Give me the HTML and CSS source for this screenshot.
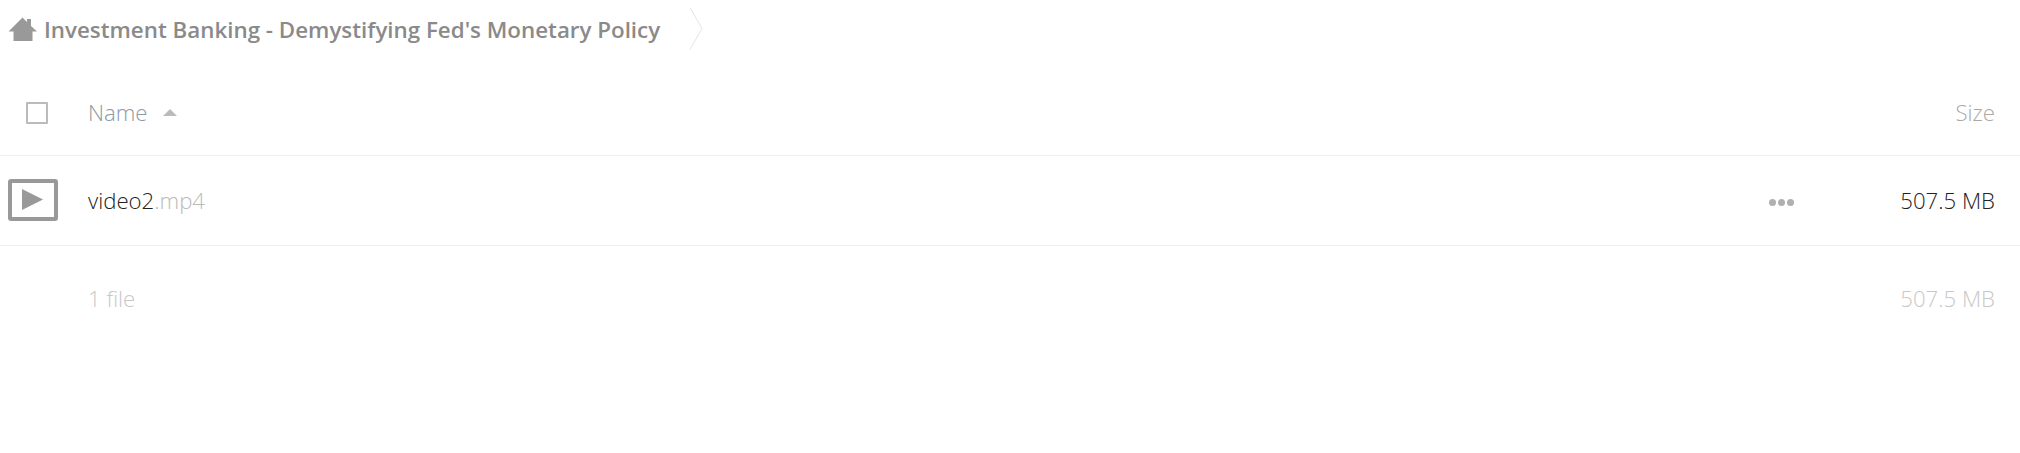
FILE: index.html
```html
<!DOCTYPE html>
<html lang="en">
<head>
<meta charset="utf-8">
<title>Files</title>
<link rel="stylesheet" href="styles.css">
</head>
<body>
<nav class="crumbs">
  <svg class="home" width="30" height="26" viewBox="0 0 30 26"><path d="M14.500 0.500 L19 5 V2 H23 V9 L29 14.500 H24.500 V24 H5.500 V14.500 H0.500 Z" fill="#999"/></svg>
  <span class="crumb">Investment Banking - Demystifying Fed's Monetary Policy</span>
  <svg class="chev" width="14" height="44" viewBox="0 0 14 44"><path d="M1 0.500 L13 21.500 L1 42.500" fill="none" stroke="#e4e4e4" stroke-width="1"/></svg>
</nav>
<div class="row head">
  <div class="c-icon"><span class="check"></span></div>
  <div class="c-name name-h">Name <span class="sort"></span></div>
  <div class="c-size size-h">Size</div>
</div>
<div class="row file">
  <div class="c-icon">
    <svg class="thumb" width="50" height="42" viewBox="0 0 50 42"><rect x="2" y="2" width="46" height="38" rx="1" fill="#fff" stroke="#999" stroke-width="4"/><path d="M14 10 V31 L35 20.500 Z" fill="#999"/></svg>
  </div>
  <div class="c-name"><span class="base">video2</span><span class="ext">.mp4</span></div>
  <div class="more"><i></i><i></i><i></i></div>
  <div class="c-size size-v">507.5 MB</div>
</div>
<div class="row sum">
  <div class="c-icon"></div>
  <div class="c-name">1 file</div>
  <div class="c-size">507.5 MB</div>
</div>
</body>
</html>
```
FILE: styles.css
```css
* { box-sizing: border-box; }
html, body { margin: 0; padding: 0; background: #fff; }
body { font-family: "Open Sans", "Liberation Sans", sans-serif; font-size: 22.2px; font-weight: 300; height: 453px; overflow: hidden; }
.crumbs { display: flex; align-items: center; height: 60px; }
.home { margin-left: 8px; flex: none; }
.crumb { margin-left: 6px; margin-top: -1px; font-size: 22.35px; font-weight: 600; color: #8a8a8a; white-space: nowrap; }
.chev { margin-left: 29px; margin-top: -2px; flex: none; }
.row { display: flex; align-items: center; padding-right: 25px; }
.head { height: 96px; padding-top: 10px; border-bottom: 1px solid #eee; }
.file { height: 90px; padding-bottom: 1px; border-bottom: 1px solid #eee; }
.sum { height: 104px; color: #c8c8c8; }
.c-icon { width: 88px; flex: none; display: flex; }
.c-name { flex: 1; white-space: nowrap; }
.c-size { flex: none; text-align: right; white-space: nowrap; }
.check { width: 22px; height: 22px; margin-left: 26px; border: 2px solid #bbb; border-radius: 1px; }
.thumb { margin-left: 8px; }
.name-h { color: #8c9aa6; display: flex; align-items: center; gap: 15px; }
.sort { width: 0; height: 0; border: 7px solid transparent; border-top: 0; border-bottom: 7px solid #bbb; }
.size-h { color: #a8a8a8; }
.base { color: #222; }
.ext { color: #bbb; }
.more { display: flex; gap: 2px; margin-right: 106px; margin-top: 4px; }
.more i { width: 7px; height: 7px; border-radius: 50%; background: #b0b0b0; }
.size-v { color: #222; }
```
